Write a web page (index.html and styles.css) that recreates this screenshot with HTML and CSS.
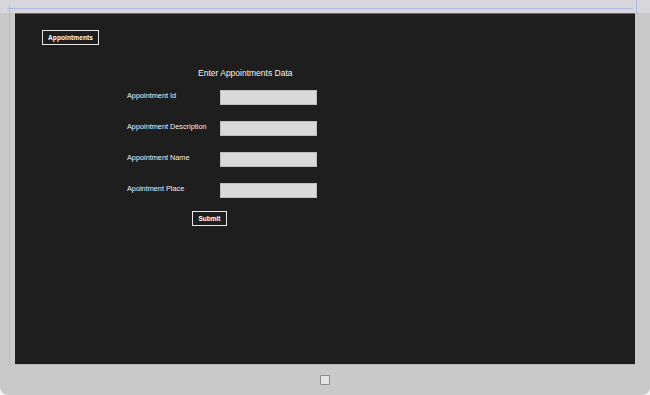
FILE: index.html
```html
<!DOCTYPE html>
<html lang="en">
<head>
    <meta charset="UTF-8">
    <meta name="viewport" content="width=device-width, initial-scale=1.0">
    <title>Appointments</title>
    <link rel="stylesheet" href="styles.css">
</head>
<body>

    <!-- Tablet frame -->
    <div class="device">
        <!-- Designer guide lines -->
        <div class="guide guide-top"></div>
        <div class="guide guide-left"></div>
        <div class="guide guide-right"></div>

        <!-- Screen -->
        <div class="screen">
            <button class="nav-btn">Appointments</button>

            <div class="form">
                <h3 class="form-title">Enter Appointments Data</h3>

                <div class="form-grid">
                    <label for="app-id">Appointment Id</label>
                    <input type="text" id="app-id">

                    <label for="app-desc">Appointment Description</label>
                    <input type="text" id="app-desc">

                    <label for="app-name">Appointment Name</label>
                    <input type="text" id="app-name">

                    <label for="app-place">Apointment Place</label>
                    <input type="text" id="app-place">
                </div>

                <button class="submit-btn">Submit</button>
            </div>
        </div>

        <!-- Bottom bezel with home button -->
        <div class="bezel">
            <span class="home-btn"></span>
        </div>
    </div>

</body>
</html>
```

FILE: styles.css
```css
/* Reset */
* {
    margin: 0;
    padding: 0;
    box-sizing: border-box;
}

body {
    width: 650px;
    height: 395px;
    background-color: #f4f4f4;
    font-family: "Liberation Sans", Arial, sans-serif;
    overflow: hidden;
}

/* Device frame */
.device {
    position: relative;
    width: 650px;
    height: 395px;
    background-color: #c9c9c9;
    border-radius: 0 0 8px 8px;
    padding: 13px 15px 0 15px;
    background-image: linear-gradient(#d7d7db, #d7d7db);
    background-size: 100% 13px;
    background-repeat: no-repeat;
}

/* Guide lines drawn over the frame */
.guide {
    position: absolute;
    background-color: #aebbe0;
}

.guide-top {
    top: 8px;
    left: 7px;
    width: 626px;
    height: 1px;
}

.guide-left {
    top: 5px;
    left: 9px;
    width: 1px;
    height: 361px;
}

.guide-right {
    top: 0;
    left: 636px;
    width: 1px;
    height: 14px;
}

/* Screen */
.screen {
    height: 351px;
    background-color: #1e1e1e;
    border-top: 1px solid #6f6a5f;
    padding: 16px 0 0 27px;
    color: #ffffff;
}

.nav-btn {
    display: block;
    width: 57px;
    height: 15px;
    background: transparent;
    border: 1.5px solid #e6e6e6;
    color: #ffffff;
    font-family: inherit;
    font-size: 6.5px;
    font-weight: bold;
    letter-spacing: 0.1px;
}

/* Form */
.form {
    margin-left: 85px;
}

.form-title {
    margin: 22px 0 0 71px;
    font-size: 8.5px;
    font-weight: normal;
    line-height: 12px;
    color: #f2f2f2;
}

.form-grid {
    display: grid;
    grid-template-columns: 93px 97px;
    row-gap: 16px;
    margin-top: 11px;
}

.form-grid label {
    font-size: 7.3px;
    line-height: 9px;
    color: #f0f0f0;
    padding-top: 1px;
}

.form-grid input {
    height: 15px;
    background-color: #d9d9d9;
    border: 1px solid #bdbdbd;
}

.submit-btn {
    display: block;
    margin: 13px 0 0 65px;
    width: 35px;
    height: 15px;
    background: transparent;
    border: 1.5px solid #e6e6e6;
    color: #ffffff;
    font-family: inherit;
    font-size: 6.5px;
    font-weight: bold;
}

/* Bottom bezel */
.bezel {
    display: flex;
    justify-content: center;
    align-items: center;
    height: 31px;
    border-top: 1px solid #b4b4b4;
}

.home-btn {
    width: 10px;
    height: 10px;
    border: 1.5px solid #8c8c8c;
    background-color: #e4e4e4;
    border-radius: 1px;
}
```
